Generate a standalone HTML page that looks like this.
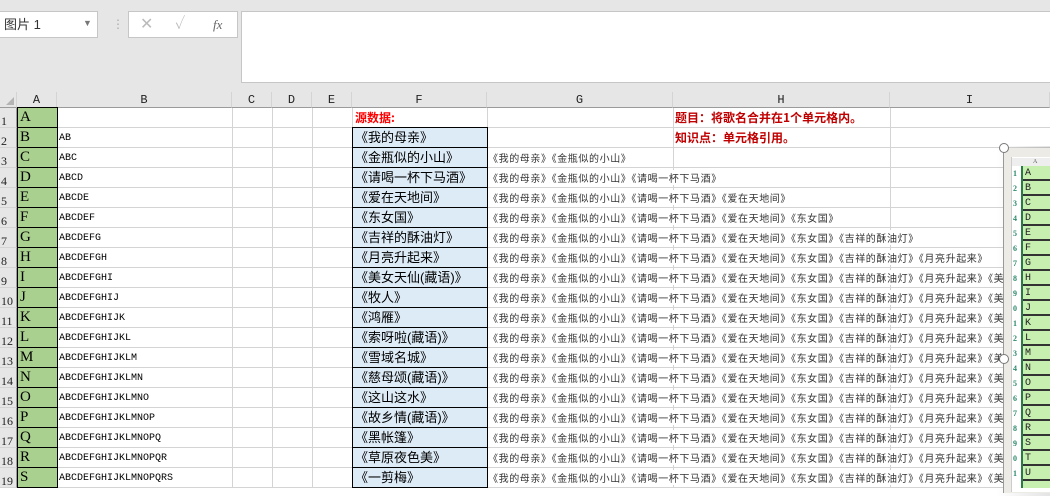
<!DOCTYPE html>
<html><head><meta charset="utf-8">
<style>
*{margin:0;padding:0;box-sizing:border-box}
body{width:1050px;height:488px;overflow:hidden;background:#fff;position:relative;font-family:"Liberation Serif","Noto Serif CJK SC",serif}
.a{position:absolute}
#top{left:0;top:0;width:1050px;height:92px;background:#e6e6e6}
.box{position:absolute;background:#fff;border:1px solid #c6c6c6}
.hdr{position:absolute;top:92px;height:16px;background:#e6e6e6;border-right:1px solid #d4d4d4;border-bottom:1px solid #9b9b9b;font-size:12px;text-align:center;line-height:16px;color:#222;font-family:"Liberation Mono","Noto Sans CJK SC",monospace}
.rn{position:absolute;left:0;width:17px;height:20px;background:#e6e6e6;border-bottom:1px solid #d4d4d4;border-right:1px solid #9b9b9b;font-size:12px;line-height:26px;padding-left:1px;color:#222;overflow:hidden}
.vl{position:absolute;top:108px;width:1px;height:380px;background:#d4d4d4}
.hl{position:absolute;left:17px;width:1033px;height:1px;background:#d4d4d4}
.ca{position:absolute;left:17px;width:41px;height:21px;background:#a9d08e;border:1px solid #000;font-size:15px;line-height:19px;padding-left:2px}
.cb{position:absolute;left:59px;font-family:"Liberation Mono",monospace;font-size:10px;line-height:20px;height:20px}
.cf{position:absolute;left:352px;width:136px;height:21px;background:#ddebf7;border:1px solid #000;font-family:"Liberation Sans","Noto Sans CJK SC",sans-serif;font-size:13px;line-height:19px;padding-left:2px;white-space:nowrap}
.cg{position:absolute;left:488px;width:515px;height:19px;overflow:hidden;white-space:nowrap;font-family:"Noto Sans CJK SC",sans-serif;font-size:10px;letter-spacing:0.6px;line-height:19px;color:#333}
.cg span{background:#fff;padding-right:3px}
.red{position:absolute;color:#c00000;font-weight:bold;font-family:"Noto Sans CJK SC",sans-serif;font-size:12px;line-height:20px}
</style></head><body>
<div class="a" id="top"></div>
<div class="box" style="left:-2px;top:11px;width:100px;height:27px;font-family:'Liberation Sans','Noto Sans CJK SC',sans-serif;font-size:13px;line-height:25px;padding-left:5px;color:#333">图片 1<span style="position:absolute;left:84px;top:-1px;font-size:9px;color:#777">▼</span></div>
<div class="a" style="left:112px;top:17px;color:#aaa;font-size:12px">⋮</div>
<div class="box" style="left:128px;top:11px;width:110px;height:27px;color:#bbb;font-size:16px;line-height:25px"><span class="a" style="left:11px">✕</span><span class="a" style="left:46px">✓</span><span class="a" style="left:84px;font-style:italic;font-size:13px;color:#666">fx</span></div>
<div class="box" style="left:241px;top:11px;width:820px;height:72px"></div>

<div class="hdr" style="left:0;width:17px;border-right:1px solid #d4d4d4"><span style="position:absolute;right:2px;bottom:2px;width:0;height:0;border-left:8px solid transparent;border-bottom:8px solid #b4b4b4"></span></div>
<div class="hdr" style="left:17px;width:40px">A</div>
<div class="hdr" style="left:57px;width:175px">B</div>
<div class="hdr" style="left:232px;width:40px">C</div>
<div class="hdr" style="left:272px;width:40px">D</div>
<div class="hdr" style="left:312px;width:40px">E</div>
<div class="hdr" style="left:352px;width:135px">F</div>
<div class="hdr" style="left:487px;width:186px">G</div>
<div class="hdr" style="left:673px;width:217px">H</div>
<div class="hdr" style="left:890px;width:160px">I</div>

<div class="vl" style="left:57px"></div><div class="vl" style="left:232px"></div><div class="vl" style="left:272px"></div><div class="vl" style="left:312px"></div><div class="vl" style="left:352px"></div><div class="vl" style="left:487px"></div><div class="vl" style="left:673px"></div><div class="vl" style="left:890px"></div>
<div class="hl" style="top:127px"></div><div class="hl" style="top:147px"></div><div class="hl" style="top:167px"></div><div class="hl" style="top:187px"></div><div class="hl" style="top:207px"></div><div class="hl" style="top:227px"></div><div class="hl" style="top:247px"></div><div class="hl" style="top:267px"></div><div class="hl" style="top:287px"></div><div class="hl" style="top:307px"></div><div class="hl" style="top:327px"></div><div class="hl" style="top:347px"></div><div class="hl" style="top:367px"></div><div class="hl" style="top:387px"></div><div class="hl" style="top:407px"></div><div class="hl" style="top:427px"></div><div class="hl" style="top:447px"></div><div class="hl" style="top:467px"></div><div class="hl" style="top:487px"></div>

<div class="rn" style="top:108px">1</div><div class="rn" style="top:128px">2</div><div class="rn" style="top:148px">3</div><div class="rn" style="top:168px">4</div><div class="rn" style="top:188px">5</div><div class="rn" style="top:208px">6</div><div class="rn" style="top:228px">7</div><div class="rn" style="top:248px">8</div><div class="rn" style="top:268px">9</div><div class="rn" style="top:288px">10</div><div class="rn" style="top:308px">11</div><div class="rn" style="top:328px">12</div><div class="rn" style="top:348px">13</div><div class="rn" style="top:368px">14</div><div class="rn" style="top:388px">15</div><div class="rn" style="top:408px">16</div><div class="rn" style="top:428px">17</div><div class="rn" style="top:448px">18</div><div class="rn" style="top:468px">19</div>

<div class="ca" style="top:107px">A</div><div class="ca" style="top:127px">B</div><div class="ca" style="top:147px">C</div><div class="ca" style="top:167px">D</div><div class="ca" style="top:187px">E</div><div class="ca" style="top:207px">F</div><div class="ca" style="top:227px">G</div><div class="ca" style="top:247px">H</div><div class="ca" style="top:267px">I</div><div class="ca" style="top:287px">J</div><div class="ca" style="top:307px">K</div><div class="ca" style="top:327px">L</div><div class="ca" style="top:347px">M</div><div class="ca" style="top:367px">N</div><div class="ca" style="top:387px">O</div><div class="ca" style="top:407px">P</div><div class="ca" style="top:427px">Q</div><div class="ca" style="top:447px">R</div><div class="ca" style="top:467px">S</div>

<div class="cb" style="top:129px">AB</div><div class="cb" style="top:149px">ABC</div><div class="cb" style="top:169px">ABCD</div><div class="cb" style="top:189px">ABCDE</div><div class="cb" style="top:209px">ABCDEF</div><div class="cb" style="top:229px">ABCDEFG</div><div class="cb" style="top:249px">ABCDEFGH</div><div class="cb" style="top:269px">ABCDEFGHI</div><div class="cb" style="top:289px">ABCDEFGHIJ</div><div class="cb" style="top:309px">ABCDEFGHIJK</div><div class="cb" style="top:329px">ABCDEFGHIJKL</div><div class="cb" style="top:349px">ABCDEFGHIJKLM</div><div class="cb" style="top:369px">ABCDEFGHIJKLMN</div><div class="cb" style="top:389px">ABCDEFGHIJKLMNO</div><div class="cb" style="top:409px">ABCDEFGHIJKLMNOP</div><div class="cb" style="top:429px">ABCDEFGHIJKLMNOPQ</div><div class="cb" style="top:449px">ABCDEFGHIJKLMNOPQR</div><div class="cb" style="top:469px">ABCDEFGHIJKLMNOPQRS</div>

<div class="red" style="left:355px;top:108px;font-size:12px;color:#f00">源数据:</div>
<div class="red" style="left:675px;top:108px">题目：将歌名合并在1个单元格内。</div>
<div class="red" style="left:675px;top:128px">知识点：单元格引用。</div>

<div class="cf" style="top:127px">《我的母亲》</div><div class="cf" style="top:147px">《金瓶似的小山》</div><div class="cf" style="top:167px">《请喝一杯下马酒》</div><div class="cf" style="top:187px">《爱在天地间》</div><div class="cf" style="top:207px">《东女国》</div><div class="cf" style="top:227px">《吉祥的酥油灯》</div><div class="cf" style="top:247px">《月亮升起来》</div><div class="cf" style="top:267px">《美女天仙(藏语)》</div><div class="cf" style="top:287px">《牧人》</div><div class="cf" style="top:307px">《鸿雁》</div><div class="cf" style="top:327px">《索呀啦(藏语)》</div><div class="cf" style="top:347px">《雪域名城》</div><div class="cf" style="top:367px">《慈母颂(藏语)》</div><div class="cf" style="top:387px">《这山这水》</div><div class="cf" style="top:407px">《故乡情(藏语)》</div><div class="cf" style="top:427px">《黑帐篷》</div><div class="cf" style="top:447px">《草原夜色美》</div><div class="cf" style="top:467px">《一剪梅》</div>

<div class="cg" style="top:148px"><span>《我的母亲》《金瓶似的小山》</span></div>
<div class="cg" style="top:168px"><span>《我的母亲》《金瓶似的小山》《请喝一杯下马酒》</span></div>
<div class="cg" style="top:188px"><span>《我的母亲》《金瓶似的小山》《请喝一杯下马酒》《爱在天地间》</span></div>
<div class="cg" style="top:208px"><span>《我的母亲》《金瓶似的小山》《请喝一杯下马酒》《爱在天地间》《东女国》</span></div>
<div class="cg" style="top:228px"><span>《我的母亲》《金瓶似的小山》《请喝一杯下马酒》《爱在天地间》《东女国》《吉祥的酥油灯》</span></div>
<div class="cg" style="top:248px"><span>《我的母亲》《金瓶似的小山》《请喝一杯下马酒》《爱在天地间》《东女国》《吉祥的酥油灯》《月亮升起来》</span></div>
<div class="cg" style="top:268px"><span>《我的母亲》《金瓶似的小山》《请喝一杯下马酒》《爱在天地间》《东女国》《吉祥的酥油灯》《月亮升起来》《美女天仙(藏语)》</span></div>
<div class="cg" style="top:288px"><span>《我的母亲》《金瓶似的小山》《请喝一杯下马酒》《爱在天地间》《东女国》《吉祥的酥油灯》《月亮升起来》《美女天仙(藏语)》</span></div>
<div class="cg" style="top:308px"><span>《我的母亲》《金瓶似的小山》《请喝一杯下马酒》《爱在天地间》《东女国》《吉祥的酥油灯》《月亮升起来》《美女天仙(藏语)》</span></div>
<div class="cg" style="top:328px"><span>《我的母亲》《金瓶似的小山》《请喝一杯下马酒》《爱在天地间》《东女国》《吉祥的酥油灯》《月亮升起来》《美女天仙(藏语)》</span></div>
<div class="cg" style="top:348px"><span>《我的母亲》《金瓶似的小山》《请喝一杯下马酒》《爱在天地间》《东女国》《吉祥的酥油灯》《月亮升起来》《美女天仙(藏语)》</span></div>
<div class="cg" style="top:368px"><span>《我的母亲》《金瓶似的小山》《请喝一杯下马酒》《爱在天地间》《东女国》《吉祥的酥油灯》《月亮升起来》《美女天仙(藏语)》</span></div>
<div class="cg" style="top:388px"><span>《我的母亲》《金瓶似的小山》《请喝一杯下马酒》《爱在天地间》《东女国》《吉祥的酥油灯》《月亮升起来》《美女天仙(藏语)》</span></div>
<div class="cg" style="top:408px"><span>《我的母亲》《金瓶似的小山》《请喝一杯下马酒》《爱在天地间》《东女国》《吉祥的酥油灯》《月亮升起来》《美女天仙(藏语)》</span></div>
<div class="cg" style="top:428px"><span>《我的母亲》《金瓶似的小山》《请喝一杯下马酒》《爱在天地间》《东女国》《吉祥的酥油灯》《月亮升起来》《美女天仙(藏语)》</span></div>
<div class="cg" style="top:448px"><span>《我的母亲》《金瓶似的小山》《请喝一杯下马酒》《爱在天地间》《东女国》《吉祥的酥油灯》《月亮升起来》《美女天仙(藏语)》</span></div>
<div class="cg" style="top:468px"><span>《我的母亲》《金瓶似的小山》《请喝一杯下马酒》《爱在天地间》《东女国》《吉祥的酥油灯》《月亮升起来》《美女天仙(藏语)》</span></div>

<!-- picture -->
<div class="a" style="left:996px;top:146px;width:60px;height:350px;background:linear-gradient(90deg,rgba(0,0,0,0),rgba(0,0,0,.12))"></div>
<div class="a" style="left:1003px;top:148px;width:50px;height:345px;background:#ecebe6;border-left:1px solid #999"></div>
<div class="a" style="left:1011px;top:157px;width:42px;height:335px;background:#fff;border-left:1px solid #ccc"></div>
<div class="a" style="left:1012px;top:158px;width:40px;height:8px;background:#eee;font-size:6px;line-height:8px;color:#555;padding-left:21px">A</div>
<div class="a" style="left:1022px;top:166px;width:30px;height:322px;background:repeating-linear-gradient(180deg,#c6efb0 0,#c6efb0 13px,#333 13px,#333 15px)"></div>
<div class="a" style="left:1021px;top:166px;width:2px;height:322px;background:#2a7a4a"></div>
<div class="a" style="left:1025px;top:166px;font-size:10px;line-height:15px;color:#222;font-family:'Liberation Mono',monospace;white-space:pre">A
B
C
D
E
F
G
H
I
J
K
L
M
N
O
P
Q
R
S
T
U</div>
<div class="a" style="left:1013px;top:166px;font-size:8px;line-height:15px;color:#2a8a6a;font-weight:bold;white-space:pre">1
2
3
4
5
6
7
8
9
0
1
2
3
4
5
6
7
8
9
0
1</div>
<div class="a" style="left:999px;top:143px;width:10px;height:10px;border-radius:50%;background:#fff;border:1.5px solid #777"></div>
<div class="a" style="left:999px;top:354px;width:10px;height:10px;border-radius:50%;background:#fff;border:1.5px solid #777"></div>
</body></html>
